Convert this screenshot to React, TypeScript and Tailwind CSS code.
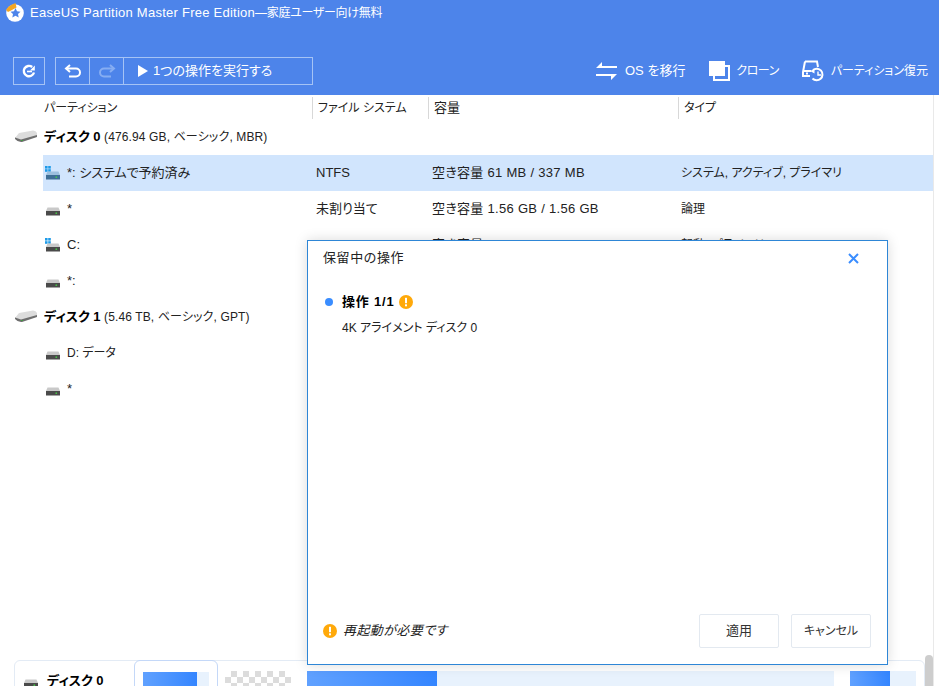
const FONT = "font-['Liberation_Sans','Noto_Sans_CJK_JP',sans-serif] [font-feature-settings:'palt'] text-[13px]";

function Logo() {
  return (
    <svg width="20" height="20" viewBox="0 0 20 20" className="shrink-0">
      <circle cx="10" cy="11" r="8.8" fill="#fff" />
      <path d="M1 8 Q3 3.5 10.5 1 L11.5 5.5 L6 8.5 L3 10 Z" fill="#f5a623" />
      <path d="M10.5 6 L12 9.3 L15.5 9.7 L13 12 L13.7 15.4 L10.5 13.7 L7.3 15.4 L8 12 L5.5 9.7 L9 9.3 Z" fill="#4d84ea" />
    </svg>
  );
}

function DiskIcon() {
  return (
    <svg width="24" height="14" viewBox="0 0 24 14" className="shrink-0">
      <path d="M5 3 L19 0.5 Q22 0.5 23 3 L23 6 L7 10 L1 8 Z" fill="#dcdcdc" />
      <path d="M1 7.5 L7 9.5 L23 5 L23 7 L8 12 Q4 12.5 1 9 Z" fill="#6f6f6f" />
      <rect x="7.2" y="10" width="1.6" height="1" fill="#3ca53c" />
    </svg>
  );
}

function PartIcon({ win = false, tint = false }: { win?: boolean; tint?: boolean }) {
  const top = tint ? "#9dc0de" : "#c9c9c9";
  const body = tint ? "#3f6f96" : "#4a4a4a";
  return (
    <svg width="16" height="14" viewBox="0 0 16 14" className="shrink-0">
      {win && (
        <g fill="#1e9be8">
          <rect x="0" y="0" width="2.6" height="2.6" />
          <rect x="3.2" y="0" width="2.6" height="2.6" />
          <rect x="0" y="3.2" width="2.6" height="2.6" />
          <rect x="3.2" y="3.2" width="2.6" height="2.6" />
        </g>
      )}
      <path d="M2.5 5.5 L13.5 5.5 L15 9 L1 9 Z" fill={top} />
      <rect x="1" y="9" width="14" height="4.5" fill={body} />
      <rect x="10.5" y="10.5" width="1.6" height="1.4" fill="#45d045" />
    </svg>
  );
}

function Warn({ size = 14 }: { size?: number }) {
  return (
    <svg width={size} height={size} viewBox="0 0 14 14" className="shrink-0">
      <circle cx="7" cy="7" r="7" fill="#ffa90a" />
      <rect x="6" y="2.8" width="2" height="5.4" fill="#fff" />
      <rect x="6" y="9.3" width="2" height="2" fill="#fff" />
    </svg>
  );
}

function Row({ icon, name, fs, cap, type, selected, nameSmall }: { icon: React.ReactNode; name: string; fs: string; cap: string; type: string; selected?: boolean; nameSmall?: boolean }) {
  return (
    <div className={`ml-[43px] flex h-9 items-center text-[#222] ${selected ? "bg-[#d1e5fd]" : ""}`}>
      <div className="flex w-[269px] items-center pl-[3px]">
        <span className="mr-[6px] flex w-[14px] justify-center">{icon}</span>
        <span className={`ml-[1px] whitespace-pre ${nameSmall ? "text-[12px]" : ""}`}>{name}</span>
      </div>
      <div className="w-[116px] pl-[4px]">{fs}</div>
      <div className="w-[250px] pl-[4px] tracking-[0.3px]">{cap}</div>
      <div className="pl-[3px] text-[12px]">{type}</div>
    </div>
  );
}

function DiskRow({ label, info }: { label: string; info: string }) {
  return (
    <div className="flex h-9 items-center pl-[14px] text-[#222]">
      <span className="mr-[6px]"><DiskIcon /></span>
      <b className="font-bold text-black">{label}</b>
      <span className="whitespace-pre text-[12px] tracking-[0.13px]">{info}</span>
    </div>
  );
}

function Bar({ w, fill }: { w: string; fill: string }) {
  return (
    <div className={`h-[30px] bg-[#e8f2fd] ${w}`}>
      <div className={`h-full bg-gradient-to-r from-[#60a1ff] to-[#3385ff] ${fill}`} />
    </div>
  );
}

export default function App() {
  return (
    <div className={`relative flex h-[686px] w-[939px] flex-col overflow-hidden bg-white ${FONT}`}>
      {/* header */}
      <header className="h-[95px] shrink-0 bg-[#4d84ea] text-white">
        <div className="flex h-[24px] items-center pl-[5px]">
          <Logo />
          <span className="ml-[5px] pt-[1px] tracking-[0.25px]">
            EaseUS Partition Master Free Edition<span className="text-[12px] tracking-[-0.3px]">—家庭ユーザー向け無料</span>
          </span>
        </div>
        <div className="mt-[33px] flex h-[28px] items-stretch pl-[13px] pr-[11px]">
          <button className="flex w-[32px] items-center justify-center border border-[#a5c3f5]">
            <svg width="16" height="16" viewBox="0 0 16 16" fill="none" stroke="#fff" strokeWidth="2.4">
              <path d="M13 9.5 A5.2 5.2 0 1 1 11.2 4" />
              <path d="M6 8.5 H11" strokeWidth="1.6" />
              <path d="M13.8 2.5 V7.5 H9 Z" fill="#fff" stroke="none" />
            </svg>
          </button>
          <div className="ml-[10px] flex w-[258px] items-stretch border border-[#a5c3f5]">
            <div className="flex w-[34px] items-center justify-center border-r border-[#a5c3f5]">
              <svg width="18" height="14" viewBox="0 0 18 14" fill="none" stroke="#fff" strokeWidth="2">
                <path d="M6 1 L2 4.5 L6 8" />
                <path d="M2.5 4.5 H12 A3.7 3.7 0 0 1 12 12.5 H5" />
              </svg>
            </div>
            <div className="flex w-[34px] items-center justify-center border-r border-[#a5c3f5]">
              <svg width="18" height="14" viewBox="0 0 18 14" fill="none" stroke="#86adf2" strokeWidth="2">
                <path d="M12 1 L16 4.5 L12 8" />
                <path d="M15.5 4.5 H6 A3.7 3.7 0 0 0 6 12.5 H13" />
              </svg>
            </div>
            <div className="flex items-center pl-[14px]">
              <svg width="10" height="12" viewBox="0 0 10 12" className="mr-[5px]"><path d="M0 0 L10 6 L0 12 Z" fill="#fff" /></svg>
              1つの操作を実行する
            </div>
          </div>
          <div className="ml-auto flex items-center text-[12px]">
            <svg width="21" height="20" viewBox="0 0 21 20" fill="#fff" className="mr-[8px]">
              <path d="M6 1 L6 5 L21 5 L21 7 L0 7 Z" />
              <path d="M15 19 L15 15 L0 15 L0 13 L21 13 Z" />
            </svg>
            <span className="text-[13px]">OS を移行</span>
            <svg width="21" height="20" viewBox="0 0 21 20" className="ml-[24px] mr-[6px]">
              <rect x="5" y="5" width="15" height="14" fill="none" stroke="#fff" strokeWidth="2" />
              <rect x="0" y="0" width="16" height="15" fill="#fff" />
            </svg>
            <span className="tracking-[-0.5px]">クローン</span>
            <svg width="23" height="22" viewBox="0 0 23 22" fill="none" stroke="#fff" strokeWidth="2" className="ml-[23px] mr-[6px]">
              <path d="M3 1.5 H15 L16 7 M3 1.5 L1 12 V16 H8" />
              <path d="M1 11 H9" />
              <path d="M4 13.5 H6" />
              <path d="M11 10 A5.8 5.8 0 1 1 10.5 18.5" />
              <path d="M16 11.5 V15 H19" strokeWidth="1.4" />
              <path d="M8 11 L12.5 9 L12.5 13.5 Z" fill="#fff" stroke="none" />
            </svg>
            <span>パーティション復元</span>
          </div>
        </div>
      </header>

      {/* table */}
      <div className="mr-[5px] flex-1 border-r border-[#e9e9e9]">
        <div className="flex h-6 items-stretch text-[12px] leading-[20px] text-[#222]">
          <div className="w-[312px] pl-[44px] pt-[3px]">パーティション</div>
          <div className="mt-[2px] w-[116px] border-l border-[#d8d8d8] pl-[5px] pt-[1px]">ファイル システム</div>
          <div className="mt-[2px] w-[250px] border-l border-[#d8d8d8] pl-[5px] pt-[1px] text-[13px]">容量</div>
          <div className="mt-[2px] border-l border-[#d8d8d8] pl-[5px] pt-[1px]">タイプ</div>
        </div>
        <DiskRow label="ディスク 0" info=" (476.94 GB, ベーシック, MBR)" />
        <Row selected icon={<PartIcon win tint />} name="*: システムで予約済み" fs="NTFS" cap="空き容量 61 MB / 337 MB" type="システム, アクティブ, プライマリ" />
        <Row icon={<PartIcon />} name="*" fs="未割り当て" cap="空き容量 1.56 GB / 1.56 GB" type="論理" />
        <Row icon={<PartIcon win />} name="C:" fs="" cap="空き容量 111 GB / 475 GB" type="起動, プライマリ" />
        <Row icon={<PartIcon />} name="*:" fs="" cap="" type="" />
        <DiskRow label="ディスク 1" info=" (5.46 TB, ベーシック, GPT)" />
        <Row nameSmall icon={<PartIcon />} name="D: データ" fs="" cap="" type="" />
        <Row icon={<PartIcon />} name="*" fs="" cap="" type="" />

        {/* disk map card */}
        <div className="ml-[14px] mr-[8px] mt-[253px] flex h-[60px] items-start rounded-t-[6px] border border-[#e3ebf5]">
          <div className="flex w-[119px] items-center pl-[8px] pt-[10px]">
            <PartIcon />
            <b className="ml-[8px] font-bold text-black">ディスク 0</b>
          </div>
          <div className="-mt-px flex h-[60px] w-[84px] justify-center rounded-t-[6px] border border-[#c4d8f8] pt-[11px]">
            <Bar w="w-[66px]" fill="w-[54px]" />
          </div>
          <div className="ml-[7px] mt-[10px] flex gap-4">
            <div className="h-[30px] w-[66px] bg-[repeating-conic-gradient(#dcdcdc_0_25%,#fff_0_50%)] bg-[length:12px_12px]" />
            <Bar w="w-[527px]" fill="w-[130px]" />
            <Bar w="w-[66px]" fill="w-[40px]" />
          </div>
        </div>
      </div>

      {/* scrollbar thumb */}
      <div className="absolute left-[925px] top-[655px] h-[31px] w-2 rounded-t-[4px] bg-[#cdcdcd]" />

      {/* modal */}
      <div className="absolute left-[307px] top-[240px] flex h-[425px] w-[581px] flex-col border border-[#2e86d6] bg-white text-[#222] shadow-[0_0_12px_rgba(0,0,0,0.15)]">
        <div className="flex h-[34px] items-center justify-between pl-[15px] pr-[28px]">
          <span className="tracking-[0.6px]">保留中の操作</span>
          <svg width="11" height="11" viewBox="0 0 11 11" stroke="#3a8dff" strokeWidth="2"><path d="M1 1 L10 10 M10 1 L1 10" /></svg>
        </div>
        <div className="flex-1 pl-[17px] pt-[17px]">
          <div className="flex items-center">
            <span className="h-2 w-2 rounded-full bg-[#3a8dff]" />
            <b className="ml-[9px] font-bold tracking-[0.8px] text-black">操作 1/1</b>
            <span className="ml-[5px]"><Warn /></span>
          </div>
          <div className="ml-[17px] mt-[7px] text-[12px]">4K アライメント ディスク 0</div>
        </div>
        <div className="flex items-center justify-between pb-[16px] pl-[15px] pr-[16px]">
          <div className="flex items-center">
            <Warn />
            <i className="ml-[6px] tracking-[0.4px]">再起動が必要です</i>
          </div>
          <div className="flex gap-3">
            <button className="h-[34px] w-[80px] rounded-[2px] border border-[#e3e9f0] text-[#333]">適用</button>
            <button className="h-[34px] w-[80px] rounded-[2px] border border-[#e3e9f0] text-[12px] text-[#333]">キャンセル</button>
          </div>
        </div>
      </div>
    </div>
  );
}
